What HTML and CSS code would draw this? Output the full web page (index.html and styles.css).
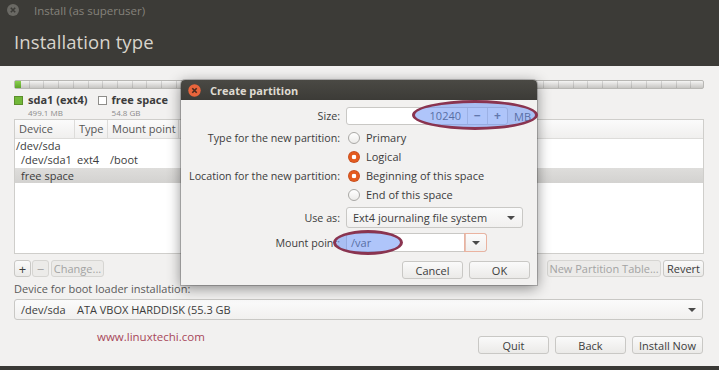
FILE: index.html
```html
<!DOCTYPE html>
<html>
<head>
<meta charset="utf-8">
<link rel="stylesheet" href="styles.css">
</head>
<body>
<div class="window">
  <div class="titlebar">
    <div class="titlerow">
      <span class="wclose"><svg width="12" height="12" viewBox="0 0 12 12"><circle cx="6" cy="6" r="6" fill="#6a6964"/><path d="M3.8 3.8l4.4 4.4M8.2 3.8l-4.4 4.4" stroke="#3c3b37" stroke-width="1.6"/></svg></span>
      <span class="wtitle">Install (as superuser)</span>
    </div>
    <div class="heading">Installation type</div>
  </div>
  <div class="content">
    <div class="partbar"><div class="partused"></div></div>
    <div class="legend">
      <div class="legitem">
        <span class="swatch green"></span>
        <div class="legtext"><div class="legname">sda1 (ext4)</div><div class="legsize">499.1 MB</div></div>
      </div>
      <div class="legitem">
        <span class="swatch free"></span>
        <div class="legtext"><div class="legname">free space</div><div class="legsize">54.8 GB</div></div>
      </div>
    </div>
    <div class="table">
      <div class="thead">
        <div class="th c1">Device</div>
        <div class="th c2">Type</div>
        <div class="th c3">Mount point</div>
        <div class="th c4"></div>
      </div>
      <div class="tr"><span class="td c1">/dev/sda</span></div>
      <div class="tr"><span class="td c1 ind">/dev/sda1</span><span class="td c2 t2">ext4</span><span class="td c3 t3">/boot</span></div>
      <div class="tr sel"><span class="td ind">free space</span></div>
    </div>
    <div class="tbtns">
      <div class="group">
        <span class="btn sm">+</span><span class="btn sm dis">−</span><span class="btn dis chg">Change...</span>
      </div>
      <div class="rgroup">
        <span class="btn dis npt">New Partition Table...</span><span class="btn rev">Revert</span>
      </div>
    </div>
    <div class="bootlabel">Device for boot loader installation:</div>
    <div class="combo big"><span>/dev/sda&nbsp;&nbsp;&nbsp;&nbsp;ATA VBOX HARDDISK (55.3 GB</span><span class="arrow"></span></div>
    <div class="footer">
      <span class="site">www.linuxtechi.com</span>
      <div class="fbtns">
        <span class="btn fb">Quit</span><span class="btn fb">Back</span><span class="btn fb">Install Now</span>
      </div>
    </div>
  </div>
  <div class="bottomedge"></div>

  <div class="dialog">
    <div class="dtitle">
      <span class="dclose"><svg width="13" height="13" viewBox="0 0 13 13"><circle cx="6.5" cy="6.5" r="6.2" fill="#e9653c"/><path d="M4.3 4.3l4.4 4.4M8.7 4.3l-4.4 4.4" stroke="#4a2a1e" stroke-width="1.6"/></svg></span>
      <span class="dname">Create partition</span>
    </div>
    <div class="dbody">
      <div class="row r18"><span class="lab">Size:</span>
        <div class="field">
          <div class="spin"><span class="val">10240</span><span class="sbtn">−</span><span class="sbtn">+</span></div>
          <span class="unit">MB</span>
        </div>
      </div>
      <div class="row r19"><span class="lab">Type for the new partition:</span><span class="radio"><span class="rb"></span>Primary</span></div>
      <div class="row r19"><span class="lab"></span><span class="radio"><span class="rb on"></span>Logical</span></div>
      <div class="row r19"><span class="lab">Location for the new partition:</span><span class="radio"><span class="rb on"></span>Beginning of this space</span></div>
      <div class="row r19"><span class="lab"></span><span class="radio"><span class="rb"></span>End of this space</span></div>
      <div class="row r21 gap1"><span class="lab">Use as:</span><div class="combo dcombo"><span>Ext4 journaling file system</span><span class="arrow"></span></div></div>
      <div class="row r19 gap2"><span class="lab">Mount point:</span><div class="entry"><span class="etext">/var</span><span class="ebtn"><span class="arrow"></span></span></div></div>
      <div class="dbtns"><span class="btn db">Cancel</span><span class="btn db">OK</span></div>
    </div>
  </div>
  <div class="mark mark1"></div>
  <div class="mark mark2"></div>
</div>
</body>
</html>
```

FILE: styles.css
```css
* { box-sizing: border-box; }
html, body { margin: 0; padding: 0; }
body {
  width: 719px; height: 370px; overflow: hidden;
  font-family: "Open Sans", "DejaVu Sans", sans-serif;
  font-size: 11px; color: #3c3c3c;
  background: #f2f1f0;
}
.window { position: relative; width: 719px; height: 370px; display: flex; flex-direction: column; }
.titlebar {
  height: 66px; background: #3c3b37; padding: 0 0 0 7px;
  display: flex; flex-direction: column;
}
.titlerow { height: 20px; display: flex; align-items: center; }
.wclose { width: 12px; height: 12px; display: flex; }
.wtitle { margin-left: 15px; color: #85827b; font-size: 11.5px; }
.heading { margin-top: 9px; margin-left: 7px; color: #d8d4cc; font-size: 18.5px; letter-spacing: 0.1px; }

.content { flex: 1; padding: 14px 15px 0 14px; display: flex; flex-direction: column; background: #f2f1f0; }
.partbar {
  height: 9px; border: 1px solid #b8b7b4; border-radius: 2px;
  background:
    repeating-linear-gradient(90deg, transparent 0 13.7px, rgba(0,0,0,0.12) 13.7px 14.7px),
    linear-gradient(#f4f4f3, #d9d8d6 60%, #c7c6c3);
  position: relative;
}
.partused { width: 6px; height: 100%; background: linear-gradient(#8ad04f, #5fa52a); }
.legend { display: flex; margin-top: 4px; height: 26px; }
.legitem { display: flex; margin-right: 10px; }
.swatch { width: 9px; height: 9px; margin-top: 3px; margin-right: 5px; border: 1px solid #5c8f2c; }
.swatch.green { background: #72b83a; }
.swatch.free { background: #fff; border-color: #8e8d8a; }
.legname { font-weight: bold; line-height: 12px; margin-top: 1px; }
.legsize { font-size: 8px; color: #8c8c8c; line-height: 9px; margin-top: 2px; }

.table { height: 135px; border: 1px solid #cfcecb; background: #fff; }
.thead { display: flex; height: 19px; background: linear-gradient(#fbfbfb, #f0efee); border-bottom: 1px solid #dddcda; }
.th { line-height: 18px; padding-left: 4px; border-right: 1px solid #dddcda; color: #555; }
.c1 { width: 60px; }
.c2 { width: 33px; }
.c3 { width: 71px; }
.th.c4 { flex: 1; border-right: none; }
.tr { height: 14px; line-height: 14px; display: flex; }
.td.c1 { padding-left: 1px; }
.ind { padding-left: 6px !important; }
.td.c1.ind { width: 62px; }
.t2 { width: 33px; }
.tr.sel { margin-top: 1px; height: 15px; line-height: 15px; background: linear-gradient(#dedddb, #d3d2d0); }
.tr.sel .td { padding-left: 6px; }

.tbtns { display: flex; justify-content: space-between; margin-top: 6px; height: 17px; }
.group, .rgroup { display: flex; }
.btn {
  display: inline-flex; align-items: center; justify-content: center;
  border: 1px solid #c9c8c5; border-radius: 3px;
  background: linear-gradient(#fafafa, #ebeae8);
  color: #3c3c3c; height: 100%;
}
.btn.dis { color: #a3a3a3; background: #ecebe9; border-color: #d6d5d2; }
.btn.sm { width: 17px; margin-right: 1px; font-size: 13px; }
.chg { width: 53px; margin-left: 1px; }
.npt { width: 114px; margin-right: 2px; }
.rev { width: 41px; }

.bootlabel { margin-top: 4px; height: 16px; line-height: 16px; color: #5a5a5a; }
.combo {
  display: flex; align-items: center; justify-content: space-between;
  border: 1px solid #c9c8c5; border-radius: 3px; background: linear-gradient(#fbfbfb, #f1f0ef);
  padding: 0 6px 0 6px;
}
.combo.big { height: 21px; margin-top: 2px; margin-right: 1px; padding-left: 6px; }
.arrow { width: 0; height: 0; border-left: 4px solid transparent; border-right: 4px solid transparent; border-top: 4px solid #4a4a4a; }

.footer { display: flex; justify-content: space-between; margin-top: 10px; height: 19px; }
.site { color: #a8485a; font-size: 11.5px; margin-left: 83px; margin-top: -1px; line-height: 16px; }
.fbtns { display: flex; gap: 6px; margin-top: 6px; margin-right: 1px; }
.btn.fb { width: 71px; height: 18px; }

.bottomedge { height: 4px; background: #3a3936; }

.dialog {
  position: absolute; left: 181px; top: 80px; width: 356px; height: 205px;
  background: #f2f1f0; border-radius: 4px 4px 0 0;
  box-shadow: 0 3px 14px rgba(0,0,0,0.45), 0 0 0 1px rgba(0,0,0,0.2);
  display: flex; flex-direction: column;
}
.dtitle { height: 20px; background: linear-gradient(#4a4944, #3c3b37); border-radius: 4px 4px 0 0; display: flex; align-items: center; padding-left: 7px; }
.dclose { width: 13px; height: 13px; display: flex; }
.dname { margin-left: 9px; color: #dfdbd2; font-weight: bold; font-size: 11px; }
.dbody { padding: 7px 7px 0 6px; display: flex; flex-direction: column; }
.row { display: flex; align-items: center; }
.r18 { height: 18px; margin-bottom: 3px; }
.r19 { height: 19px; }
.r21 { height: 21px; }
.gap1 { margin-top: 3px; }
.gap2 { margin-top: 5px; }
.lab { width: 153px; text-align: right; margin-right: 6px; flex: none; white-space: nowrap; font-size: 10.7px; }
.field { display: flex; align-items: center; height: 100%; }
.spin { width: 162px; height: 18px; border: 1px solid #c9c8c5; border-radius: 3px; background: #fff; display: flex; }
.val { flex: 1; text-align: right; padding-right: 6px; line-height: 16px; }
.sbtn { width: 20px; border-left: 1px solid #d4d3d0; text-align: center; line-height: 16px; font-weight: bold; font-size: 12px; color: #555; }
.unit { margin-left: 6px; }
.radio { display: flex; align-items: center; }
.rb { width: 12px; height: 12px; border-radius: 50%; border: 1px solid #a9a8a5; background: linear-gradient(#fff, #ecebe9); margin: 0 6px 0 2px; }
.rb.on { border: none; background: radial-gradient(circle, #fff 0 2px, #e35a1e 2.6px 5px, #c9501f 5px 6px); }
.dcombo { width: 177px; height: 21px; padding-left: 6px; padding-right: 7px; }
.entry { width: 141px; height: 19px; border: 1px solid #c9c8c5; border-radius: 3px; background: #fff; display: flex; }
.etext { flex: 1; padding-left: 4px; line-height: 17px; }
.ebtn { width: 21px; border-left: 1px solid #e4c2b6; display: flex; align-items: center; justify-content: center; border-radius: 0 3px 3px 0; box-shadow: 0 0 0 1px #eab3a0; background: linear-gradient(#fbfbfb, #f0efee); }
.dbtns { display: flex; justify-content: flex-end; gap: 6px; margin-top: 9px; height: 18px; }
.btn.db { width: 61px; }

.mark { position: absolute; border: 3px solid #8a3450; border-radius: 50%; background: rgba(110, 150, 245, 0.55); }
.mark1 { left: 412px; top: 100px; width: 126px; height: 30px; }
.mark2 { left: 333px; top: 230px; width: 70px; height: 25px; }
```
